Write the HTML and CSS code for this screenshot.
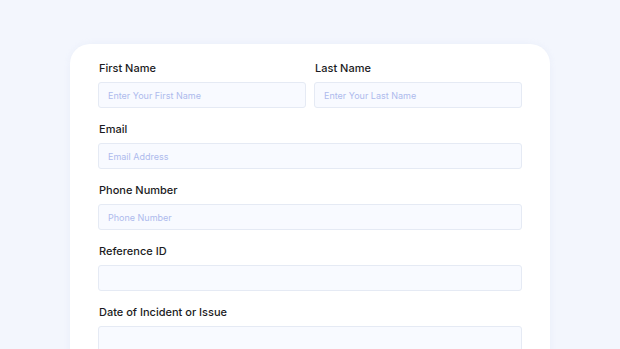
FILE: index.html
```html
<!DOCTYPE html>
<html>
<head>
<meta charset="utf-8">
<link rel="stylesheet" href="styles.css">
</head>
<body>
<div class="page">
  <form class="card">
    <div class="row">
      <div class="field">
        <label class="label">First Name</label>
        <input class="input" placeholder="Enter Your First Name">
      </div>
      <div class="field">
        <label class="label">Last Name</label>
        <input class="input" placeholder="Enter Your Last Name">
      </div>
    </div>
    <div class="field">
      <label class="label">Email</label>
      <input class="input" placeholder="Email Address">
    </div>
    <div class="field">
      <label class="label">Phone Number</label>
      <input class="input" placeholder="Phone Number">
    </div>
    <div class="field">
      <label class="label">Reference ID</label>
      <input class="input">
    </div>
    <div class="field">
      <label class="label">Date of Incident or Issue</label>
      <input class="input">
    </div>
  </form>
</div>
</body>
</html>
```
FILE: styles.css
```css
html, body {
  margin: 0;
  padding: 0;
  height: 100%;
  overflow: hidden;
}
body {
  background: #f3f6fd;
  font-family: "Inter", "Lato", sans-serif;
}
.page {
  padding: 44px 70px 0 70px;
}
.card {
  background: #ffffff;
  border-radius: 20px;
  padding: 17px 28px 40px 28px;
  display: flex;
  flex-direction: column;
  gap: 14px;
  box-shadow: 0 0 6px rgba(220, 228, 245, 0.4);
}
.row {
  display: grid;
  grid-template-columns: 1fr 1fr;
  gap: 8px;
}
.field {
  display: flex;
  flex-direction: column;
  gap: 7px;
}
.label {
  font-size: 11px;
  font-weight: 500;
  color: #1b1b22;
  line-height: 14px;
  padding-left: 1px;
}
.input {
  box-sizing: border-box;
  height: 26px;
  width: 100%;
  margin: 0;
  border: 1px solid #e5eaf4;
  border-radius: 3px;
  background: #f8faff;
  padding: 0 9px;
  font-family: "Inter", "Lato", sans-serif;
  font-size: 9px;
  color: #333;
  outline: none;
}
.input::placeholder {
  color: #aebaed;
}
```
